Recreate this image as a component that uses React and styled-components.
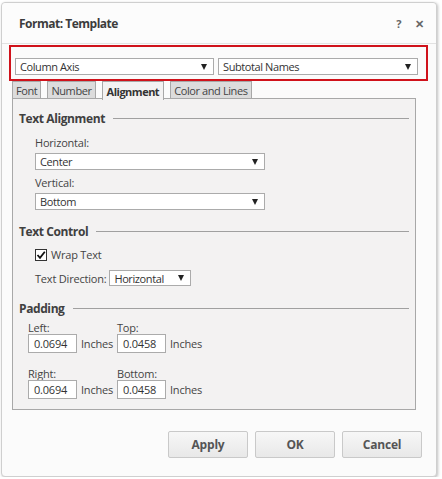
import React from 'react';
import styled, { createGlobalStyle } from 'styled-components';

const GlobalStyle = createGlobalStyle`
  body {
    margin: 0;
    background: #ffffff;
    font-family: "Open Sans", "Noto Sans", sans-serif;
    font-size: 11px;
    letter-spacing: -0.2px;
    color: #333;
  }
`;

const Dialog = styled.div`
  box-sizing: border-box;
  width: 436px;
  height: 475px;
  margin: 2px 0 0 1px;
  border: 1px solid #cfcfcf;
  border-radius: 4px;
  background: #fbfbfb;
  box-shadow: 1px 1px 3px rgba(0, 0, 0, 0.25);
  display: flex;
  flex-direction: column;
`;

const Header = styled.div`
  height: 40px;
  border-bottom: 1px solid #e2e2e2;
  display: flex;
  align-items: center;
  justify-content: space-between;
  padding: 0 12px 0 17px;
  background: #fcfcfc;
  border-radius: 4px 4px 0 0;
`;

const Title = styled.div`
  font-size: 12px;
  font-weight: 700;
  letter-spacing: -0.5px;
  color: #3c3c3c;
`;

const HeaderTools = styled.div`
  display: flex;
  gap: 14px;
  color: #666;
  font-weight: 700;
  font-size: 11px;
`;

const Highlight = styled.div`
  margin: 1px 8px 0 7px;
  height: 36px;
  box-sizing: border-box;
  border: 2px solid #d0121b;
  padding: 11px 8px 0 4px;
  display: flex;
  gap: 4px;
`;

const Select = styled.div`
  box-sizing: border-box;
  width: ${(p) => p.$w}px;
  height: ${(p) => p.$h || 17}px;
  border: 1px solid #ababab;
  background: #fff;
  display: flex;
  align-items: center;
  justify-content: space-between;
  padding: 0 6px 0 4px;
  color: #333;
  letter-spacing: -0.4px;
  line-height: 1;
`;

const Arrow = styled.span`
  width: 0;
  height: 0;
  border-left: 3.5px solid transparent;
  border-right: 3.5px solid transparent;
  border-top: 6px solid #222;
`;

const Tabs = styled.div`
  display: flex;
  gap: 6px;
  margin-left: 10px;
  height: 18px;
  position: relative;
  z-index: 1;
`;

const Tab = styled.div`
  box-sizing: border-box;
  height: ${(p) => (p.$active ? 19 : 18)}px;
  padding: 0 ${(p) => (p.$active ? 4 : 3)}px;
  border: 1px solid #a8a8a8;
  border-bottom: ${(p) => (p.$active ? 'none' : '1px solid #a8a8a8')};
  background: ${(p) => (p.$active ? '#f3f2f2' : '#dcdcdc')};
  font-weight: ${(p) => (p.$active ? 700 : 400)};
  color: ${(p) => (p.$active ? '#333' : '#444')};
  letter-spacing: ${(p) => (p.$active ? -0.5 : -0.4)}px;
  display: flex;
  align-items: center;
  line-height: 1;
`;

const Panel = styled.div`
  box-sizing: border-box;
  margin: -1px 20px 0 10px;
  height: 312px;
  border: 1px solid #a8a8a8;
  background: #f3f2f2;
  padding: 11px 6px 0 6px;
  display: flex;
  flex-direction: column;
`;

const Section = styled.div`
  display: flex;
  align-items: center;
  gap: 8px;
  height: 16px;
  margin-top: ${(p) => p.$mt || 0}px;
  font-size: 12px;
  font-weight: 700;
  letter-spacing: -0.4px;
  color: #404040;

  &::after {
    content: '';
    flex: 1;
    border-top: 1px solid #a0a0a0;
  }
`;

const Group = styled.div`
  padding-left: ${(p) => p.$indent}px;
  display: flex;
  flex-direction: column;
  align-items: flex-start;
`;

const Label = styled.div`
  line-height: ${(p) => p.$lh || 14}px;
  margin-top: ${(p) => p.$mt || 0}px;
  margin-bottom: ${(p) => p.$mb || 0}px;
  color: #444;
`;

const Row = styled.div`
  display: flex;
  align-items: center;
  gap: ${(p) => p.$gap || 4}px;
  margin-top: ${(p) => p.$mt || 0}px;
  color: #444;
`;

const Check = styled.div`
  box-sizing: border-box;
  width: 12px;
  height: 12px;
  border: 1px solid #333;
  background: #fff;
  display: flex;
  align-items: center;
  justify-content: center;
`;

const PadGrid = styled.div`
  display: grid;
  grid-template-columns: 89px 89px;
  row-gap: 15px;
  margin-top: 6px;
  padding-left: 9px;
`;

const Field = styled.div`
  display: flex;
  flex-direction: column;
`;

const Input = styled.div`
  box-sizing: border-box;
  width: 49px;
  height: 19px;
  border: 1px solid #ababab;
  background: #fff;
  padding: 0 5px;
  display: flex;
  align-items: center;
  color: #333;
`;

const Footer = styled.div`
  display: flex;
  justify-content: flex-end;
  gap: 7px;
  margin: 21px 14px 0 0;
`;

const Button = styled.div`
  box-sizing: border-box;
  width: 80px;
  height: 27px;
  border: 1px solid #c9c9c9;
  border-radius: 2px;
  background: linear-gradient(#f7f7f7, #e8e8e8);
  display: flex;
  align-items: center;
  justify-content: center;
  font-size: 12px;
  font-weight: 700;
  color: #555;
`;

function Dropdown({ value, width, height }) {
  return (
    <Select $w={width} $h={height}>
      <span>{value}</span>
      <Arrow />
    </Select>
  );
}

function PadField({ label, value }) {
  return (
    <Field>
      <Label $lh={12}>{label}</Label>
      <Row>
        <Input>{value}</Input>
        <span>Inches</span>
      </Row>
    </Field>
  );
}

export default function App() {
  return (
    <>
      <GlobalStyle />
      <Dialog>
        <Header>
          <Title>Format: Template</Title>
          <HeaderTools>
            <span>?</span>
            <span>✕</span>
          </HeaderTools>
        </Header>

        <Highlight>
          <Dropdown value="Column Axis" width={199} />
          <Dropdown value="Subtotal Names" width={200} />
        </Highlight>

        <Tabs>
          <Tab>Font</Tab>
          <Tab>Number</Tab>
          <Tab $active>Alignment</Tab>
          <Tab>Color and Lines</Tab>
        </Tabs>

        <Panel>
          <Section>Text Alignment</Section>
          <Group $indent={16}>
            <Label $mt={10} $mb={3}>Horizontal:</Label>
            <Dropdown value="Center" width={230} />
            <Label $mt={6} $mb={3}>Vertical:</Label>
            <Dropdown value="Bottom" width={230} />
          </Group>

          <Section $mt={13}>Text Control</Section>
          <Group $indent={16}>
            <Row $mt={8}>
              <Check>
                <svg width="10" height="10" viewBox="0 0 10 10">
                  <path d="M1.5 5 L4 7.8 L8.8 1.8" fill="none" stroke="#111" strokeWidth="1.8" />
                </svg>
              </Check>
              <span>Wrap Text</span>
            </Row>
            <Row $mt={8} $gap={3}>
              <span>Text Direction:</span>
              <Dropdown value="Horizontal" width={82} height={16} />
            </Row>
          </Group>

          <Section $mt={14}>Padding</Section>
          <PadGrid>
            <PadField label="Left:" value="0.0694" />
            <PadField label="Top:" value="0.0458" />
            <PadField label="Right:" value="0.0694" />
            <PadField label="Bottom:" value="0.0458" />
          </PadGrid>
        </Panel>

        <Footer>
          <Button>Apply</Button>
          <Button>OK</Button>
          <Button>Cancel</Button>
        </Footer>
      </Dialog>
    </>
  );
}
